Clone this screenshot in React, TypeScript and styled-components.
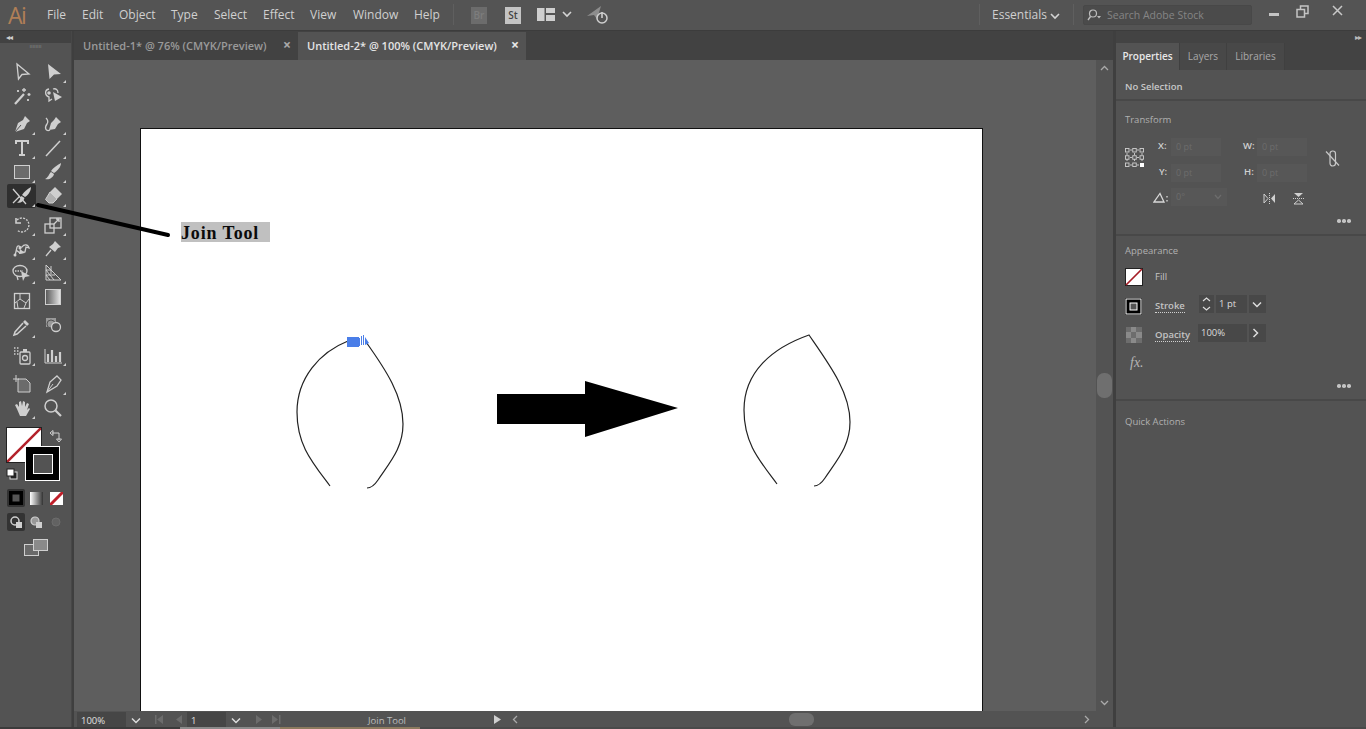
import React from "react";
import styled, { createGlobalStyle } from "styled-components";

const Global = createGlobalStyle`
  html, body { margin: 0; padding: 0; background: #535353; overflow: hidden; }
  * { box-sizing: border-box; }
  body { font-family: "Open Sans", "Liberation Sans", sans-serif; }
`;

const Screen = styled.div`
  position: relative;
  width: 1366px;
  height: 729px;
  overflow: hidden;
  background: #535353;
  color: #d6d6d6;
`;

/* ---------- top menu bar ---------- */
const MenuBar = styled.div`
  position: absolute;
  left: 0;
  top: 0;
  width: 1366px;
  height: 31px;
  background: #545454;
  border-bottom: 1px solid #3c3c3c;
`;
const Logo = styled.div`
  position: absolute;
  left: 8px;
  top: -1px;
  font: 400 23px "Open Sans", sans-serif;
  color: #b07f57;
  letter-spacing: -1.5px;
`;
const MenuItem = styled.span<{ $x: number }>`
  position: absolute;
  left: ${(p) => p.$x}px;
  top: 7px;
  font-size: 12px;
  line-height: 16px;
  color: #d0d0d0;
`;
const BarBadge = styled.div<{ $x: number; $on?: boolean }>`
  position: absolute;
  left: ${(p) => p.$x}px;
  top: 7px;
  width: 16px;
  height: 17px;
  background: ${(p) => (p.$on ? "#c4c4c4" : "#6c6c6c")};
  color: ${(p) => (p.$on ? "#444" : "#7d7d7d")};
  font-size: 10px;
  font-weight: 600;
  text-align: center;
  line-height: 17px;
`;
const BarIcon = styled.svg<{ $x: number; $y: number }>`
  position: absolute;
  left: ${(p) => p.$x}px;
  top: ${(p) => p.$y}px;
`;
const BarRule = styled.div<{ $x: number }>`
  position: absolute;
  left: ${(p) => p.$x}px;
  top: 4px;
  width: 1px;
  height: 21px;
  background: #5f5f5f;
`;
const SearchBox = styled.div`
  position: absolute;
  left: 1083px;
  top: 5px;
  width: 169px;
  height: 20px;
  background: #4b4b4b;
  border: 1px solid #484848;
  border-radius: 2px;
  padding-left: 23px;
  font-size: 10.5px;
  line-height: 18px;
  color: #858585;
`;
const WindowBtns = styled.div`
  position: absolute;
  left: 1125px;
  top: 0;
`;

/* ---------- document tabs ---------- */
const TabRow = styled.div`
  position: absolute;
  left: 74px;
  top: 31px;
  width: 1040px;
  height: 29px;
  background: #424242;
  display: flex;
  align-items: flex-end;
`;
const DocTab = styled.div<{ $active?: boolean; $w: number }>`
  position: relative;
  width: ${(p) => p.$w}px;
  height: 28px;
  background: ${(p) => (p.$active ? "#535353" : "#424242")};
  color: ${(p) => (p.$active ? "#e4e4e4" : "#9a9a9a")};
  font-size: 11px;
  font-weight: 600;
  line-height: 28px;
  padding-left: 9px;
  white-space: nowrap;
`;
const TabClose = styled.span<{ $active?: boolean }>`
  position: absolute;
  right: 7px;
  top: -1px;
  font-size: 14px;
  font-weight: 700;
  color: ${(p) => (p.$active ? "#e8e8e8" : "#aaa")};
`;

/* ---------- tools ---------- */
const ToolPanel = styled.div`
  position: absolute;
  left: 0;
  top: 31px;
  width: 72px;
  height: 696px;
  background: #535353;
  border-right: 1px solid #474747;
`;
const ToolHead = styled.div`
  height: 12px;
  background: #424242;
  padding-left: 6px;
  font-size: 8px;
  line-height: 11px;
  letter-spacing: -1px;
  color: #cfcfcf;
`;
const Gutter = styled.div`
  position: absolute;
  left: 72px;
  top: 31px;
  width: 2px;
  height: 696px;
  background: #3f3f3f;
`;
const Grip = styled.div`
  height: 7px;
  color: #858585;
  font-size: 6px;
  line-height: 7px;
  text-align: center;
`;
const ToolGrid = styled.div`
  position: absolute;
  left: 7px;
  top: 29px;
  width: 62px;
  display: grid;
  grid-template-columns: 31px 31px;
`;
const ToolCell = styled.div<{ $gap?: number; $active?: boolean; $corner?: boolean }>`
  position: relative;
  height: 24px;
  margin-top: ${(p) => p.$gap ?? 0}px;
  display: flex;
  align-items: center;
  justify-content: center;
  border-radius: 2px;
  background: ${(p) => (p.$active ? "#2f2f2f" : "transparent")};
  width: 29px;
  &::after {
    content: "";
    display: ${(p) => (p.$corner ? "block" : "none")};
    position: absolute;
    right: 1px;
    bottom: 1px;
    border-left: 3px solid transparent;
    border-bottom: 3px solid #cfcfcf;
  }
`;
const SwatchFill = styled.div`
  position: absolute;
  left: 6px;
  top: 396px;
  width: 36px;
  height: 36px;
  background: #fff;
  border: 1px solid #222;
  overflow: hidden;
`;
const SwatchStroke = styled.div`
  position: absolute;
  left: 25px;
  top: 415px;
  width: 35px;
  height: 35px;
  background: #000;
  border: 1px solid #fff;
  display: flex;
  align-items: center;
  justify-content: center;
  &::after {
    content: "";
    width: 18px;
    height: 18px;
    background: #535353;
    border: 1px solid #fff;
  }
`;
const ModeBtn = styled.div<{ $x: number; $y: number; $on?: boolean }>`
  position: absolute;
  left: ${(p) => p.$x}px;
  top: ${(p) => p.$y}px;
  width: 18px;
  height: 18px;
  border-radius: 2px;
  background: ${(p) => (p.$on ? "#333" : "transparent")};
  display: flex;
  align-items: center;
  justify-content: center;
`;

/* ---------- canvas ---------- */
const Canvas = styled.div`
  position: absolute;
  left: 74px;
  top: 60px;
  width: 1022px;
  height: 651px;
  background: #5e5e5e;
`;
const Artboard = styled.div`
  position: absolute;
  left: 66px;
  top: 68px;
  width: 843px;
  height: 600px;
  background: #fff;
  border: 1px solid #111;
`;
const Label = styled.div`
  position: absolute;
  left: 40px;
  top: 93px;
  width: 89px;
  height: 20px;
  background: #c0c0c0;
  color: #0b0b0b;
  font: 700 18px/22px "Liberation Serif", serif;
  letter-spacing: 0.85px;
  white-space: nowrap;
`;
const ArtLayer = styled.svg`
  position: absolute;
  left: 0;
  top: 0;
  pointer-events: none;
`;
const VScroll = styled.div`
  position: absolute;
  left: 1096px;
  top: 60px;
  width: 17px;
  height: 651px;
  background: #535353;
`;
const VThumb = styled.div`
  position: absolute;
  left: 1px;
  top: 313px;
  width: 15px;
  height: 25px;
  border-radius: 7px;
  background: #6f6f6f;
`;
const PanelGutter = styled.div`
  position: absolute;
  left: 1113px;
  top: 31px;
  width: 3px;
  height: 696px;
  background: #3f3f3f;
`;

/* ---------- status bar ---------- */
const StatusBar = styled.div`
  position: absolute;
  left: 74px;
  top: 711px;
  width: 1039px;
  height: 17px;
  background: #535353;
`;
const ZoomField = styled.div<{ $x: number; $w: number }>`
  position: absolute;
  left: ${(p) => p.$x}px;
  top: 1px;
  width: ${(p) => p.$w}px;
  height: 16px;
  background: #464646;
  font-size: 9.5px;
  line-height: 17px;
  padding-left: 4px;
  color: #e0e0e0;
`;
const StatusText = styled.span`
  position: absolute;
  left: 294px;
  top: 2px;
  font-size: 9.5px;
  line-height: 15px;
  color: #bdbdbd;
`;
const HThumb = styled.div`
  position: absolute;
  left: 715px;
  top: 2px;
  width: 25px;
  height: 13px;
  border-radius: 6px;
  background: #6f6f6f;
`;
const BottomEdge = styled.div`
  position: absolute;
  left: 0;
  top: 727px;
  width: 1366px;
  height: 2px;
  background: linear-gradient(90deg, #3b3b3b 0 180px, #8a8a8a 180px 280px, #8c7a5e 280px 420px, #4a4a4a 420px);
`;

/* ---------- right panel ---------- */
const RightPanel = styled.div`
  position: absolute;
  left: 1116px;
  top: 31px;
  width: 250px;
  height: 696px;
  background: #535353;
`;
const PanelHead = styled.div`
  height: 12px;
  background: #434343;
  color: #bbb;
  font-size: 8px;
  line-height: 11px;
  text-align: right;
  padding-right: 5px;
  letter-spacing: -1px;
`;
const PanelTabs = styled.div`
  display: flex;
  height: 27px;
  background: #434343;
`;
const PanelTab = styled.div<{ $active?: boolean; $w: number }>`
  width: ${(p) => p.$w}px;
  background: ${(p) => (p.$active ? "#535353" : "#484848")};
  color: ${(p) => (p.$active ? "#e8e8e8" : "#a8a8a8")};
  font-size: 10px;
  font-weight: ${(p) => (p.$active ? 600 : 400)};
  line-height: 27px;
  text-align: center;
  border-right: 1px solid #404040;
`;
const Section = styled.div<{ $top: number; $h: number; $line?: boolean }>`
  position: absolute;
  left: 0;
  top: ${(p) => p.$top}px;
  width: 250px;
  height: ${(p) => p.$h}px;
  border-bottom: ${(p) => (p.$line ? "2px solid #484848" : "none")};
`;
const SectionTitle = styled.div<{ $y: number; $bright?: boolean }>`
  position: absolute;
  left: 9px;
  top: ${(p) => p.$y}px;
  font-size: 9.5px;
  line-height: 14px;
  color: ${(p) => (p.$bright ? "#c8c8c8" : "#b0b0b0")};
  font-weight: ${(p) => (p.$bright ? 600 : 400)};
`;
const FieldLabel = styled.span<{ $x: number; $y: number }>`
  position: absolute;
  left: ${(p) => p.$x}px;
  top: ${(p) => p.$y}px;
  font-size: 9.5px;
  font-weight: 600;
  line-height: 14px;
  color: #d0d0d0;
`;
const GhostField = styled.div<{ $x: number; $y: number; $w: number }>`
  position: absolute;
  left: ${(p) => p.$x}px;
  top: ${(p) => p.$y}px;
  width: ${(p) => p.$w}px;
  height: 18px;
  background: #575757;
  color: #6c6c6c;
  font-size: 9px;
  line-height: 18px;
  padding-left: 5px;
`;
const DarkField = styled.div<{ $x: number; $y: number; $w: number }>`
  position: absolute;
  left: ${(p) => p.$x}px;
  top: ${(p) => p.$y}px;
  width: ${(p) => p.$w}px;
  height: 18px;
  background: #484848;
  color: #dcdcdc;
  font-size: 9.5px;
  line-height: 18px;
  padding-left: 3px;
  display: flex;
  align-items: center;
`;
const LinkLabel = styled.span<{ $x: number; $y: number; $dotted?: boolean }>`
  position: absolute;
  left: ${(p) => p.$x}px;
  top: ${(p) => p.$y}px;
  font-size: 9.5px;
  line-height: 13px;
  color: #c4c4c4;
  font-weight: ${(p) => (p.$dotted ? 600 : 400)};
  border-bottom: ${(p) => (p.$dotted ? "1px dotted #d0d0d0" : "none")};
`;
const More = styled.div<{ $y: number }>`
  position: absolute;
  left: 221px;
  top: ${(p) => p.$y}px;
  display: flex;
  gap: 1.5px;
  & > i {
    width: 3.5px;
    height: 3.5px;
    border-radius: 50%;
    background: #c4c4c4;
  }
`;
const FxMark = styled.span`
  position: absolute;
  left: 14px;
  top: 119px;
  font: italic 400 14px/16px "Liberation Serif", serif;
  color: #b5b5b5;
`;

const s = { fill: "none", stroke: "#cfcfcf", strokeWidth: 1.3 };

const Ico = ({ children }: { children: React.ReactNode }) => (
  <svg width={20} height={20} viewBox="0 0 20 20">{children}</svg>
);

const tools: { icon: React.ReactNode; gap?: number; active?: boolean; corner?: boolean }[] = [
  { icon: <Ico><path d="M5 2 L17 12 L10 12.500 L6.500 17 Z" {...s} /></Ico> },
  { icon: <Ico><path d="M5 2 L18 12 L11 12.500 L6.500 17 Z" fill="#cfcfcf" /></Ico>, corner: true },
  { icon: <Ico><path d="M3 18 L12 8" {...s} strokeWidth={2.2} /><path d="M12 2v4M10 4h4M17 7v3M15.500 8.500h3M6 4v2M5 5h2M16 13v2M15 14h2" {...s} /></Ico> },
  { icon: <Ico><path d="M6 3 C1 4 2 10 6 11 L6 15 L9 13 M10 3 C13 2 15 4 15 7" {...s} /><circle cx="6" cy="7" r="1.800" fill="#cfcfcf" /><path d="M10 6 L19 11 L12 15 Z" fill="#cfcfcf" /></Ico> },
  { icon: <Ico><path d="M13 2 L18 7 L15 9 L12 15 L3 18 L6 9 L11 6 Z" fill="#cfcfcf" /><path d="M3 18 L9 11" stroke="#535353" strokeWidth={1} /></Ico>, gap: 4, corner: true },
  { icon: <Ico><path d="M13 3 L18 8 L15 10 L12 15 L6 16 L8 9 L11 6 Z" fill="#cfcfcf" /><path d="M7 16 C3 18 1 14 4 10 C6 7 4 5 3 4" {...s} /></Ico>, gap: 4, corner: true },
  { icon: <Ico><path d="M4 6 V3 H16 V6 M10 3 V17 M7 17 H13" {...s} strokeWidth={2} /></Ico>, corner: true },
  { icon: <Ico><path d="M3 18 L17 3" {...s} strokeWidth={1.500} /></Ico>, corner: true },
  { icon: <Ico><rect x="2.500" y="3.500" width="15" height="13" fill="#6b6b6b" stroke="#cfcfcf" strokeWidth={1} /></Ico>, corner: true },
  { icon: <Ico><path d="M18 1 C18 5 14 9 11 11 L8 9 C10 6 14 3 18 1Z" fill="#cfcfcf" /><path d="M8 10 L11 12 C10 16 6 18 2 17 C5 16 6 12 8 10 Z" fill="#cfcfcf" /></Ico>, corner: true },
  { icon: <Ico><path d="M1 3 L14 18 M1 17 L8 10" {...s} /><path d="M19 1 C19 6 15 10 13 11 L10 9 C12 6 15 3 19 1Z" fill="#cfcfcf" /><path d="M9.500 10 L12.500 12 C11.500 16 8 17.500 5 16.500 C8 15.500 8 12 9.500 10 Z" fill="#cfcfcf" /></Ico>, active: true, corner: true },
  { icon: <Ico><path d="M12 1 L19 8 L14 13 L7 6 Z" fill="#cfcfcf" /><path d="M7 6 L14 13 L10 17 L6 17 L2.500 13.500 Z" fill="#b0b0b0" stroke="#cfcfcf" strokeWidth={1} /></Ico>, corner: true },
  { icon: <Ico><path d="M5 5 A7 7 0 1 1 5 15" {...s} strokeDasharray="2 1.200" /><path d="M4 3 V8 H9" {...s} strokeWidth={1.600} /></Ico>, gap: 5, corner: true },
  { icon: <Ico><rect x="2" y="9" width="9" height="9" {...s} /><rect x="7" y="3" width="11" height="10" {...s} /><path d="M11 9 L16 4 M13 4 H16 V7" {...s} /></Ico>, gap: 5, corner: true },
  { icon: <Ico><path d="M3 17 L5 8 C7 5 8 9 10 8 C12 5 16 5 17 9 L14 8 L13 13 L8 14 L4 11" {...s} /><circle cx="8" cy="9" r="1.500" fill="#cfcfcf" /><circle cx="3" cy="16" r="1.500" fill="#cfcfcf" /><path d="M8 10 L13 14 L7 15 Z" fill="#cfcfcf" /></Ico>, corner: true },
  { icon: <Ico><path d="M12 2 L18 8 L15 9 L12 13 L6 8 L10 5 Z" fill="#cfcfcf" /><path d="M8 11 L3 17" {...s} /></Ico>, corner: true },
  { icon: <Ico><ellipse cx="8" cy="8" rx="7" ry="5.500" {...s} /><path d="M3 8h8" {...s} strokeDasharray="1.500 1" /><path d="M9 8 L18 13 L13 14 L11 18 Z" fill="#cfcfcf" /><path d="M5 13 L6 17" {...s} /></Ico>, corner: true },
  { icon: <Ico><path d="M3 2 V17 H18 L3 2 M3 7 L11 17 M3 12 L7 17 M8 3 L8 11 M3 7 H8 M3 12 H12" {...s} strokeWidth={1} /></Ico>, corner: true },
  { icon: <Ico><rect x="2.500" y="2.500" width="15" height="15" {...s} /><path d="M3 12 L8 8 L8 3 M8 8 L14 12 L17 8 M14 12 L12 17 M6 17 L5 11" {...s} strokeWidth={1} /></Ico>, gap: 4 },
  { icon: <Ico><defs><linearGradient id="grad"><stop offset="0" stopColor="#555" /><stop offset="1" stopColor="#e8e8e8" /></linearGradient></defs><rect x="2.500" y="2.500" width="15" height="15" fill="url(#grad)" stroke="#cfcfcf" /></Ico> },
  { icon: <Ico><path d="M13 3 L17 7 L15 9 L11 5 Z" fill="#cfcfcf" /><path d="M11 6 L3 15 L2 18 L5 17 L14 9" {...s} strokeWidth={1.500} /></Ico>, gap: 2, corner: true },
  { icon: <Ico><rect x="3" y="3" width="10" height="9" fill="#9a9a9a" /><circle cx="8" cy="9" r="4" fill="#999" stroke="#535353" /><circle cx="13" cy="12" r="4.500" fill="#535353" stroke="#cfcfcf" strokeWidth={1.300} /></Ico> },
  { icon: <Ico><rect x="8" y="7" width="10" height="12" rx="1" {...s} /><circle cx="13" cy="13" r="2.500" {...s} /><path d="M11 4h4v3h-4z" fill="#cfcfcf" /><path d="M2 3h1.500M5 3h1.500M2 6h1.500M5 6h1.500M2 9h1.500M5 9h1.500" {...s} strokeDasharray="1.500 1" /></Ico>, gap: 4, corner: true },
  { icon: <Ico><path d="M2 4 V18 H19" {...s} strokeWidth={1} /><path d="M5 9v8M9 5v12M13 11v6M17 7v10" {...s} strokeWidth={2.200} /></Ico>, gap: 4, corner: true },
  { icon: <Ico><path d="M6 5 H14 L18 9 V18 H6 Z" fill="#6b6b6b" stroke="#cfcfcf" strokeWidth={1} /><path d="M1 5h6M4 1v7" {...s} strokeWidth={1} /></Ico>, gap: 5 },
  { icon: <Ico><path d="M14 2 L18 6 L14 12 L4 18 L7 8 Z" {...s} /><path d="M4 18 L10 10" {...s} strokeWidth={1} /></Ico>, gap: 5, corner: true },
  { icon: <Ico><path d="M5 11 L3 7 L5 6 L7 9 L7 4 L9 3 L10 8 L11 3 L13 4 L13 9 L15 5 L17 6 L15 12 L17 10 L18 11 L14 18 L8 18 Z" fill="#cfcfcf" /></Ico>, corner: true },
  { icon: <Ico><circle cx="8" cy="8" r="6" {...s} strokeWidth={1.500} /><path d="M12.500 12.500 L18 18" {...s} strokeWidth={2.200} /></Ico> },
];

const App = () => (
  <Screen>
    <Global />
    <MenuBar>
      <Logo>Ai</Logo>
      <MenuItem $x={47}>File</MenuItem>
      <MenuItem $x={82}>Edit</MenuItem>
      <MenuItem $x={119}>Object</MenuItem>
      <MenuItem $x={171}>Type</MenuItem>
      <MenuItem $x={214}>Select</MenuItem>
      <MenuItem $x={263}>Effect</MenuItem>
      <MenuItem $x={310}>View</MenuItem>
      <MenuItem $x={353}>Window</MenuItem>
      <MenuItem $x={414}>Help</MenuItem>
      <BarRule $x={453} />
      <BarBadge $x={471}>Br</BarBadge>
      <BarBadge $x={505} $on>St</BarBadge>
      <BarIcon $x={537} $y={8} width={18} height={13} viewBox="0 0 18 13">
        <path d="M0 0h7.500v13H0z M9 0h9v5H9z M9 7h9v6H9z" fill="#cfcfcf" />
      </BarIcon>
      <BarIcon $x={562} $y={10} width={10} height={8} viewBox="0 0 10 8">
        <path d="M1 2 L5 6 L9 2" fill="none" stroke="#d4d4d4" strokeWidth={1.600} />
      </BarIcon>
      <BarIcon $x={586} $y={5} width={24} height={20} viewBox="0 0 24 20">
        <path d="M1 11 L15 1 L11 14 L8 10 Z" fill="#8d8d8d" />
        <circle cx="16" cy="13" r="5" fill="none" stroke="#cfcfcf" strokeWidth={1.500} />
        <path d="M16 7 V13" stroke="#cfcfcf" strokeWidth={1.600} />
      </BarIcon>
      <BarRule $x={979} />
      <MenuItem $x={992}>Essentials</MenuItem>
      <BarIcon $x={1050} $y={12} width={10} height={8} viewBox="0 0 10 8">
        <path d="M1 2 L5 6 L9 2" fill="none" stroke="#d4d4d4" strokeWidth={1.600} />
      </BarIcon>
      <BarRule $x={1073} />
      <SearchBox>Search Adobe Stock</SearchBox>
      <BarIcon $x={1087} $y={9} width={14} height={12} viewBox="0 0 14 12">
        <circle cx="6" cy="4.500" r="3.500" fill="none" stroke="#bdbdbd" strokeWidth={1.200} />
        <path d="M3.500 7.500 L1 11" stroke="#bdbdbd" strokeWidth={1.400} />
        <path d="M10 7h4l-2 2.500z" fill="#bdbdbd" />
      </BarIcon>
      <WindowBtns>
        <BarIcon $x={144} $y={13} width={10} height={4} viewBox="0 0 10 4">
          <rect width="10" height="3" fill="#c4c4c4" />
        </BarIcon>
        <BarIcon $x={171} $y={5} width={13} height={13} viewBox="0 0 13 13">
          <path d="M1 4.500h7.500v7.500H1z M4.500 4V1H12v7.500H9" fill="none" stroke="#c4c4c4" strokeWidth={1.500} />
        </BarIcon>
        <BarIcon $x={207} $y={5} width={11} height={11} viewBox="0 0 11 11">
          <path d="M1 1 L10 10 M10 1 L1 10" stroke="#c8c8c8" strokeWidth={1.500} />
        </BarIcon>
      </WindowBtns>
    </MenuBar>

    <TabRow>
      <DocTab $w={224}>
        Untitled-1* @ 76% (CMYK/Preview)
        <TabClose>×</TabClose>
      </DocTab>
      <DocTab $w={228} $active>
        Untitled-2* @ 100% (CMYK/Preview)
        <TabClose $active>×</TabClose>
      </DocTab>
    </TabRow>

    <ToolPanel>
      <ToolHead>◂◂</ToolHead>
      <Grip>ıııııııı</Grip>
      <ToolGrid>
        {tools.map((t, i) => (
          <ToolCell key={i} $gap={t.gap} $active={t.active} $corner={t.corner}>
            {t.icon}
          </ToolCell>
        ))}
      </ToolGrid>
      <SwatchFill>
        <svg width="34" height="34" viewBox="0 0 34 34">
          <path d="M0 34 L34 0" stroke="#b3202a" strokeWidth={2.500} />
        </svg>
      </SwatchFill>
      <BarIcon $x={49} $y={398} width={14} height={14} viewBox="0 0 14 14">
        <path d="M3 4 H10 V11 M1 4 L4 1.500 V6.500 Z M10 13 L7.500 10 H12.500 Z" fill="none" stroke="#cfcfcf" strokeWidth={1} />
      </BarIcon>
      <SwatchStroke />
      <BarIcon $x={6} $y={437} width={12} height={12} viewBox="0 0 12 12">
        <rect x="4" y="4" width="7" height="7" fill="#222" stroke="#ddd" />
        <rect x="1" y="1" width="7" height="7" fill="#fff" stroke="#222" />
      </BarIcon>
      <ModeBtn $x={7} $y={458} $on>
        <svg width="14" height="14" viewBox="0 0 14 14">
          <rect width="14" height="14" fill="#000" />
          <rect x="3.500" y="3.500" width="7" height="7" fill="#555" />
        </svg>
      </ModeBtn>
      <ModeBtn $x={27} $y={458}>
        <svg width="13" height="13" viewBox="0 0 13 13">
          <defs>
            <linearGradient id="mode"><stop offset="0" stopColor="#fff" /><stop offset="1" stopColor="#333" /></linearGradient>
          </defs>
          <rect width="13" height="13" fill="url(#mode)" />
        </svg>
      </ModeBtn>
      <ModeBtn $x={47} $y={458}>
        <svg width="13" height="13" viewBox="0 0 13 13">
          <rect width="13" height="13" fill="#fff" />
          <path d="M0 13 L13 0" stroke="#c01f2a" strokeWidth={3} />
        </svg>
      </ModeBtn>
      <ModeBtn $x={7} $y={482} $on>
        <svg width="14" height="14" viewBox="0 0 14 14">
          <circle cx="6" cy="6" r="4" fill="none" stroke="#cfcfcf" strokeWidth={1.500} />
          <rect x="7" y="7" width="6" height="6" fill="#cfcfcf" />
        </svg>
      </ModeBtn>
      <ModeBtn $x={27} $y={482}>
        <svg width="14" height="14" viewBox="0 0 14 14">
          <circle cx="6" cy="6" r="4" fill="#999" stroke="#cfcfcf" strokeWidth={1.200} />
          <rect x="7" y="7" width="6" height="6" fill="#cfcfcf" />
        </svg>
      </ModeBtn>
      <ModeBtn $x={47} $y={482}>
        <svg width="14" height="14" viewBox="0 0 14 14">
          <circle cx="7" cy="7" r="4" fill="#626262" stroke="#6c6c6c" />
        </svg>
      </ModeBtn>
      <BarIcon $x={24} $y={508} width={24} height={17} viewBox="0 0 24 17">
        <rect x="0.500" y="5.500" width="14" height="11" fill="#6a6a6a" stroke="#cfcfcf" />
        <rect x="9.500" y="0.500" width="14" height="11" fill="#8a8a8a" stroke="#cfcfcf" />
      </BarIcon>
    </ToolPanel>
    <Gutter />

    <Canvas>
      <Artboard>
        <Label>Join Tool</Label>
      </Artboard>
    </Canvas>

    <ArtLayer width={1366} height={729} viewBox="0 0 1366 729">
      <path d="M38 205 L168 235" stroke="#000" strokeWidth={4} strokeLinecap="round" />
      <g fill="none" stroke="#222" strokeWidth={1.200}>
        <path d="M330 486 C312 462 297 445 297 412 C297 378 320 352 348 341" />
        <path d="M366 342 C386 370 403 396 403 424 C403 448 390 462 378 480 C374 486 371 488 367 488" />
        <path d="M777 484 C759 460 744 443 744 410 C744 372 772 348 809 335 C829 364 850 392 850 422 C850 446 837 460 825 478 C821 484 818 486 814 486" />
      </g>
      <rect x="347" y="337" width="12" height="10" fill="#4a7ee8" />
      <path d="M359 338 h1 v8 h-1z M361 336 h1 v9 h-1z M363 335 h1 v10 h-1z M365 337 L369 343 L365 345 Z" fill="#4a7ee8" />
      <path d="M497 394 H585 V381 L678 408 L585 437 V424 H497 Z" fill="#000" />
    </ArtLayer>

    <VScroll>
      <BarIcon $x={4} $y={5} width={9} height={6} viewBox="0 0 9 6">
        <path d="M1 5 L4.500 1.500 L8 5" fill="none" stroke="#aaa" strokeWidth={1.300} />
      </BarIcon>
      <VThumb />
      <BarIcon $x={4} $y={640} width={9} height={6} viewBox="0 0 9 6">
        <path d="M1 1 L4.500 4.500 L8 1" fill="none" stroke="#aaa" strokeWidth={1.300} />
      </BarIcon>
    </VScroll>
    <PanelGutter />

    <StatusBar>
      <ZoomField $x={3} $w={49}>100%</ZoomField>
      <BarIcon $x={57} $y={6} width={10} height={7} viewBox="0 0 10 7">
        <path d="M1 1.500 L5 5.500 L9 1.500" fill="none" stroke="#ddd" strokeWidth={1.500} />
      </BarIcon>
      <BarIcon $x={80} $y={4} width={30} height={9} viewBox="0 0 30 9">
        <path d="M1 0h1.500v9H1z M9 0 L3 4.500 L9 9z M28 0 L22 4.500 L28 9z" fill="#6c6c6c" />
      </BarIcon>
      <ZoomField $x={113} $w={39}>1</ZoomField>
      <BarIcon $x={157} $y={6} width={10} height={7} viewBox="0 0 10 7">
        <path d="M1 1.500 L5 5.500 L9 1.500" fill="none" stroke="#ddd" strokeWidth={1.500} />
      </BarIcon>
      <BarIcon $x={181} $y={4} width={26} height={9} viewBox="0 0 26 9">
        <path d="M1 0 L7 4.500 L1 9z M17 0 L23 4.500 L17 9z M24 0h1.500v9H24z" fill="#6c6c6c" />
      </BarIcon>
      <StatusText>Join Tool</StatusText>
      <BarIcon $x={420} $y={4} width={7} height={9} viewBox="0 0 7 9">
        <path d="M0 0 L7 4.500 L0 9z" fill="#cfcfcf" />
      </BarIcon>
      <BarIcon $x={438} $y={4} width={6} height={9} viewBox="0 0 6 9">
        <path d="M5 1 L1.500 4.500 L5 8" fill="none" stroke="#aaa" strokeWidth={1.300} />
      </BarIcon>
      <HThumb />
      <BarIcon $x={1010} $y={4} width={6} height={9} viewBox="0 0 6 9">
        <path d="M1 1 L4.500 4.500 L1 8" fill="none" stroke="#aaa" strokeWidth={1.300} />
      </BarIcon>
    </StatusBar>
    <BottomEdge />

    <RightPanel>
      <PanelHead>▸▸</PanelHead>
      <PanelTabs>
        <PanelTab $active $w={64}>Properties</PanelTab>
        <PanelTab $w={47}>Layers</PanelTab>
        <PanelTab $w={58}>Libraries</PanelTab>
      </PanelTabs>
      <Section $top={39} $h={31} $line>
        <SectionTitle $y={10} $bright>No Selection</SectionTitle>
      </Section>
      <Section $top={70} $h={135} $line>
        <SectionTitle $y={12}>Transform</SectionTitle>
        <BarIcon $x={9} $y={47} width={19} height={19} viewBox="0 0 19 19">
          <g fill="none" stroke="#d0d0d0" strokeWidth={0.900}>
            <path d="M2 5V7M2 11V13M9.500 5V7M9.500 11V13M17 5V7M17 11V13M5 2H7M12 2H14M5 9.500H7M12 9.500H14M5 17H7M12 17H14" />
            <rect x="0.500" y="0.500" width="3.500" height="3.500" />
            <rect x="7.750" y="0.500" width="3.500" height="3.500" />
            <rect x="15" y="0.500" width="3.500" height="3.500" />
            <rect x="0.500" y="7.750" width="3.500" height="3.500" />
            <rect x="7.750" y="7.750" width="3.500" height="3.500" />
            <rect x="15" y="7.750" width="3.500" height="3.500" />
            <rect x="0.500" y="15" width="3.500" height="3.500" />
            <rect x="7.750" y="15" width="3.500" height="3.500" />
          </g>
          <rect x="15" y="15" width="4" height="4" fill="#fff" />
        </BarIcon>
        <FieldLabel $x={42} $y={38}>X:</FieldLabel>
        <GhostField $x={55} $y={37} $w={50}>0 pt</GhostField>
        <FieldLabel $x={127} $y={38}>W:</FieldLabel>
        <GhostField $x={141} $y={37} $w={50}>0 pt</GhostField>
        <FieldLabel $x={43} $y={64}>Y:</FieldLabel>
        <GhostField $x={55} $y={63} $w={50}>0 pt</GhostField>
        <FieldLabel $x={128} $y={64}>H:</FieldLabel>
        <GhostField $x={141} $y={63} $w={50}>0 pt</GhostField>
        <BarIcon $x={37} $y={91} width={16} height={11} viewBox="0 0 16 11">
          <path d="M1 10 H11 L7 1.500 Z" fill="none" stroke="#d8d8d8" strokeWidth={1.300} />
          <path d="M14 4v1.500M14 8v1.500" stroke="#d8d8d8" strokeWidth={1.300} />
        </BarIcon>
        <GhostField $x={55} $y={87} $w={56}>0°</GhostField>
        <BarIcon $x={98} $y={93} width={8} height={6} viewBox="0 0 8 6">
          <path d="M1 1 L4 4.500 L7 1" fill="none" stroke="#6c6c6c" strokeWidth={1.300} />
        </BarIcon>
        <BarIcon $x={147} $y={92} width={13} height={11} viewBox="0 0 13 11">
          <path d="M1 1 L5 5.500 L1 10 Z" fill="none" stroke="#d0d0d0" />
          <path d="M12 1 L8 5.500 L12 10 Z" fill="#d0d0d0" />
          <path d="M6.500 0V11" stroke="#d0d0d0" strokeDasharray="1 1" />
        </BarIcon>
        <BarIcon $x={177} $y={91} width={11} height={13} viewBox="0 0 11 13">
          <path d="M1 1 H10 L5.500 5 Z" fill="#d0d0d0" />
          <path d="M1 12 H10 L5.500 8 Z" fill="none" stroke="#d0d0d0" />
          <path d="M0 6.500H11" stroke="#d0d0d0" strokeDasharray="1 1" />
        </BarIcon>
        <BarIcon $x={209} $y={49} width={15} height={17} viewBox="0 0 15 17">
          <rect x="5" y="1" width="5.500" height="15" rx="2.700" fill="none" stroke="#c8c8c8" strokeWidth={1.200} />
          <path d="M1 1.500 L14 15.500" stroke="#c8c8c8" strokeWidth={1.200} />
        </BarIcon>
        <More $y={118}><i /><i /><i /></More>
      </Section>
      <Section $top={205} $h={165} $line>
        <SectionTitle $y={8}>Appearance</SectionTitle>
        <BarIcon $x={9} $y={32} width={18} height={18} viewBox="0 0 18 18">
          <rect x="0.500" y="0.500" width="17" height="17" fill="#fff" stroke="#222" />
          <path d="M1 17 L17 1" stroke="#a51d26" strokeWidth={1.700} />
        </BarIcon>
        <LinkLabel $x={39} $y={34}>Fill</LinkLabel>
        <BarIcon $x={9} $y={62} width={17} height={17} viewBox="0 0 17 17">
          <rect width="17" height="17" fill="#000" />
          <rect x="1" y="1" width="15" height="15" fill="none" stroke="#fff" />
          <rect x="5" y="5" width="7" height="7" fill="#555" stroke="#fff" />
        </BarIcon>
        <LinkLabel $x={39} $y={63} $dotted>Stroke</LinkLabel>
        <DarkField $x={83} $y={59} $w={15}>
          <svg width="9" height="14" viewBox="0 0 9 14">
            <path d="M1 4 L4.500 1 L8 4 M1 10 L4.500 13 L8 10" fill="none" stroke="#ddd" strokeWidth={1.200} />
          </svg>
        </DarkField>
        <DarkField $x={100} $y={59} $w={31}>1 pt</DarkField>
        <DarkField $x={133} $y={59} $w={17}>
          <svg width="10" height="7" viewBox="0 0 10 7">
            <path d="M1 1.500 L5 5.500 L9 1.500" fill="none" stroke="#ddd" strokeWidth={1.500} />
          </svg>
        </DarkField>
        <BarIcon $x={10} $y={91} width={16} height={16} viewBox="0 0 16 16">
          <rect width="16" height="16" fill="#8a8a8a" />
          <path d="M0 0h5v5H0z M10 0h6v5h-6z M5 5h5v6H5z M0 11h5v5H0z M10 11h6v5h-6z" fill="#6d6d6d" />
        </BarIcon>
        <LinkLabel $x={39} $y={92} $dotted>Opacity</LinkLabel>
        <DarkField $x={82} $y={88} $w={49}>100%</DarkField>
        <DarkField $x={133} $y={88} $w={17}>
          <svg width="7" height="10" viewBox="0 0 7 10">
            <path d="M1.500 1 L5.500 5 L1.500 9" fill="none" stroke="#ddd" strokeWidth={1.500} />
          </svg>
        </DarkField>
        <FxMark>fx.</FxMark>
        <More $y={148}><i /><i /><i /></More>
      </Section>
      <SectionTitle $y={384}>Quick Actions</SectionTitle>
    </RightPanel>
  </Screen>
);

export default App;
